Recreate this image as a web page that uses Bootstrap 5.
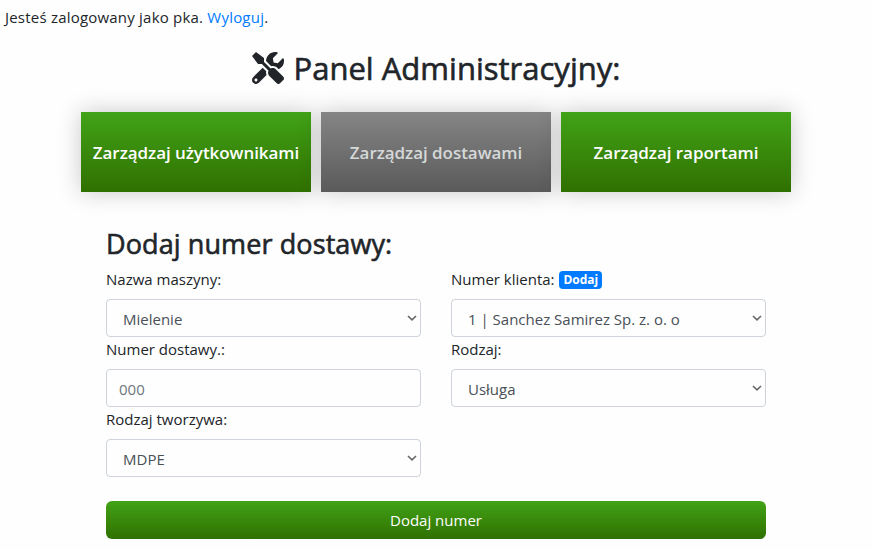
<!DOCTYPE html>
<html lang="pl">
<head>
<meta charset="utf-8">
<meta name="viewport" content="width=device-width, initial-scale=1">
<title>Panel Administracyjny</title>
<link rel="stylesheet" href="https://cdn.jsdelivr.net/npm/bootstrap@5.3.0/dist/css/bootstrap.min.css">
<style>
body{font-family:"Segoe UI","Open Sans","Noto Sans",sans-serif;font-size:15px;line-height:24px;color:#212529;background:#fefefe;overflow:hidden}
.login-line{padding:5px 5px 0;letter-spacing:.21px}
.login-line a{color:#007bff}
.panel-title{font-size:31px;line-height:38px;margin-top:20px;font-weight:500;-webkit-text-stroke:.6px currentColor}
.tools-icon{width:32px;height:32px;fill:currentColor;margin-right:10px;-webkit-text-stroke:0}
.panel-title span{letter-spacing:.01px}
.tiles{gap:10px;margin-top:25px}
.tile{width:230px;height:80px;border:0;border-radius:0;font-size:17px;font-weight:600;letter-spacing:-.05px;color:#fff;padding:1px 0 0;box-shadow:0 0 22px rgba(0,0,0,.22)}
.green-fill,.green-fill:hover{background:linear-gradient(#41a317,#307000);color:#fff}
.tile:disabled{background:linear-gradient(#858585,#5a5a5a);color:#d5d8d8;opacity:1}
.delivery-form{width:660px;margin-top:35px}
.form-title{font-size:27px;line-height:34px;margin:0 0 6px;font-weight:500;letter-spacing:.1px;-webkit-text-stroke:.6px currentColor}
.fields{--bs-gutter-x:30px}
.field-label{display:block;height:24px;margin-bottom:8px}
.fields .form-control,.fields .form-select{height:38px;font-size:15px;color:#495057;border:1px solid #ced4da;border-radius:4px;padding:7px 12px 5px;background-color:#fefefe}
.fields .form-select{padding-left:16px;background-image:url("data:image/svg+xml,%3Csvg xmlns='http://www.w3.org/2000/svg' viewBox='0 0 10 6'%3E%3Cpath d='M1 1l4 3.8L9 1' fill='none' stroke='%23666' stroke-width='1.6'/%3E%3C/svg%3E");background-size:10px 6px;background-position:right 3px center}
.fields .form-control::placeholder{color:#6c757d}
.add-badge{background:#007bff;font-size:12px;line-height:12px;padding:3px 4px;border-radius:4px;font-weight:700;margin-left:1px;vertical-align:1px}
.submit-btn{height:38px;margin-top:24px;border:0;border-radius:6px;font-size:15px;line-height:24px}
</style>
<script src="https://cdn.jsdelivr.net/npm/bootstrap@5.3.0/dist/js/bootstrap.bundle.min.js"></script>
</head>
<body>
<div class="login-line">Jesteś zalogowany jako pka. <a href="#" class="text-decoration-none">Wyloguj</a>.</div>
<h1 class="panel-title d-flex justify-content-center align-items-center mb-0">
<svg class="tools-icon" viewBox="0 0 512 512" aria-hidden="true"><path d="M501.1 395.7L384 278.6c-23.1-23.1-57.6-27.6-85.4-13.9L192 158.1V96L64 0 0 64l96 128h62.1l106.6 106.6c-13.6 27.8-9.2 62.3 13.9 85.4l117.1 117.1c14.6 14.6 38.2 14.6 52.7 0l52.7-52.7c14.5-14.6 14.5-38.2 0-52.7zM331.7 225c28.3 0 54.9 11 74.9 31l19.4 19.4c15.8-6.9 30.8-16.5 43.8-29.5 37.1-37.1 49.7-89.3 37.9-136.7-2.2-9-13.5-12.1-20.1-5.5l-74.4 74.4-67.9-11.3L334 98.9l74.4-74.4c6.6-6.6 3.4-17.9-5.7-20.2-47.4-11.7-99.6.9-136.6 37.9-28.5 28.5-41.9 66.1-41.2 103.6l82.1 82.1c8.1-1.9 16.5-2.9 24.7-2.9zm-103.9 82l-56.7-56.7L18.7 402.8c-25 25-25 65.5 0 90.5s65.5 25 90.5 0l123.6-123.6c-7.6-19.9-9.9-41.6-5-62.7zM64 472c-13.2 0-24-10.8-24-24 0-13.3 10.7-24 24-24s24 10.7 24 24c0 13.2-10.7 24-24 24z"/></svg>
<span>Panel Administracyjny:</span>
</h1>
<div class="tiles d-flex justify-content-center">
<button type="button" class="btn tile green-fill">Zarządzaj użytkownikami</button>
<button type="button" class="btn tile" disabled>Zarządzaj dostawami</button>
<button type="button" class="btn tile green-fill">Zarządzaj raportami</button>
</div>
<form class="delivery-form mx-auto">
<h2 class="form-title">Dodaj numer dostawy:</h2>
<div class="row fields">
<div class="col-6"><label class="field-label" for="machine">Nazwa maszyny:</label><select id="machine" class="form-select"><option>Mielenie</option></select></div>
<div class="col-6"><label class="field-label" for="client">Numer klienta: <a href="#" class="badge add-badge text-white text-decoration-none">Dodaj</a></label><select id="client" class="form-select"><option>1 | Sanchez Samirez Sp. z. o. o</option></select></div>
<div class="col-6"><label class="field-label" for="number">Numer dostawy.:</label><input id="number" class="form-control" placeholder="000"></div>
<div class="col-6"><label class="field-label" for="kind">Rodzaj:</label><select id="kind" class="form-select"><option>Usługa</option></select></div>
<div class="col-6"><label class="field-label" for="material">Rodzaj tworzywa:</label><select id="material" class="form-select"><option>MDPE</option></select></div>
</div>
<button type="button" class="btn submit-btn green-fill w-100">Dodaj numer</button>
</form>
</body>
</html>
